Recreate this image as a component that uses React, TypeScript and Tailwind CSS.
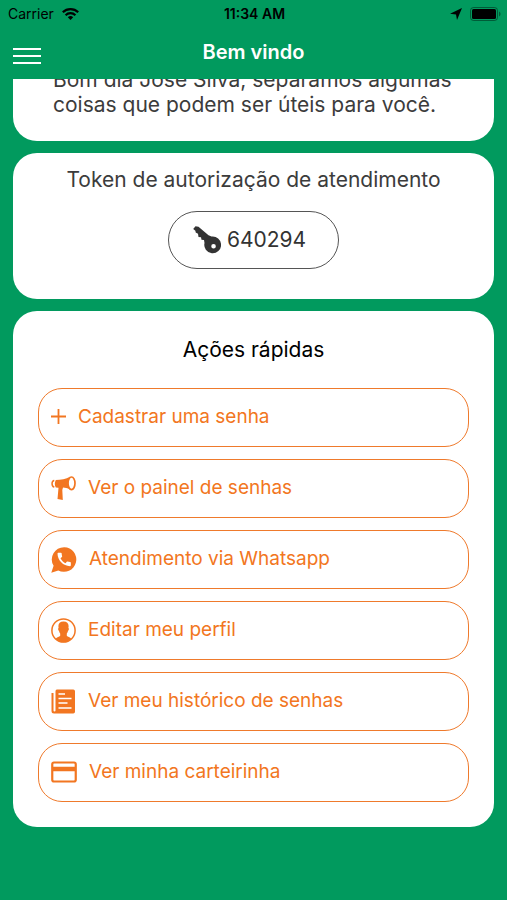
import type { ReactNode } from "react";

function PlusIcon() {
  return (
    <svg width="15" height="25" viewBox="0 0 15 25" fill="none" stroke="currentColor" strokeWidth="1.8" aria-hidden="true">
      <path d="M0 11.500h15M7.500 4v15" />
    </svg>
  );
}

function MegaphoneIcon() {
  return (
    <svg width="25" height="25" viewBox="0 0 25 25" fill="currentColor" aria-hidden="true">
      <path d="M4.800 4C10 4 15 3.200 19 0.800C16.800 5 16.800 9.500 18.800 13.200C16.500 11.800 14 11.500 12 11.400L11.300 14L11.800 24L6.500 23L7.500 11.800L4.800 11.500C3.500 9 3.500 6.500 4.800 4Z" />
      <ellipse cx="20.500" cy="7.300" rx="3.500" ry="6.300" fill="none" stroke="currentColor" strokeWidth="1.700" />
      <path d="M3.300 4.500C0.300 4.800 0.300 10.500 3.300 11" fill="none" stroke="currentColor" strokeWidth="1.500" />
    </svg>
  );
}

function WhatsappIcon() {
  return (
    <svg width="26" height="26" viewBox="0 0 26 26" fill="currentColor" aria-hidden="true">
      <path d="M13.300 0.200a12.300 12.300 0 1 1-6 23.200L0.300 25.800L2.600 18.800A12.300 12.300 0 0 1 13.300 0.200Z" />
      <g transform="translate(4.300 3.600) scale(0.740)" fill="white">
        <path d="M20.010 15.380c-1.230 0-2.420-.2-3.530-.56a.977.977 0 0 0-1.010.24l-1.570 1.970c-2.830-1.350-5.480-3.900-6.890-6.830l1.950-1.660c.27-.28.35-.67.24-1.020-.37-1.110-.56-2.300-.56-3.530 0-.54-.45-.99-.99-.99H4.190C3.650 3 3 3.240 3 3.990 3 13.280 10.730 21 20.010 21c.71 0 .99-.63.99-1.180v-3.450c0-.54-.45-.99-.99-.99z" />
      </g>
    </svg>
  );
}

function ProfileIcon() {
  return (
    <svg width="25" height="25" viewBox="0 0 25 25" fill="currentColor" aria-hidden="true">
      <circle cx="12.500" cy="12.500" r="11.600" fill="none" stroke="currentColor" strokeWidth="1.500" />
      <path d="M12.500 3.500c3.400 0 5.100 1.800 5.100 4.600 0 .9-.1 1.400-.2 1.900.8.3.5 2.400-.4 2.900-.3 1.300-.7 2-1.200 2.600v2.300c.9 1.300 3.200 1.300 4.700 2.900a11 11 0 0 1-16 0c1.500-1.600 3.800-1.600 4.700-2.900v-2.300c-.5-.6-.9-1.300-1.200-2.600-.9-.5-1.200-2.600-.4-2.900-.1-.5-.2-1-.2-1.900 0-2.800 1.700-4.600 5.100-4.600Z" />
    </svg>
  );
}

function HistoryIcon() {
  return (
    <svg width="25" height="25" viewBox="0 0 25 25" fill="currentColor" aria-hidden="true">
      <path d="M6.500 0.500h15.800a1.700 1.700 0 0 1 1.700 1.700v20.600a1.700 1.700 0 0 1-1.700 1.700H3a2.500 2.500 0 0 1-2.500-2.500V4h2v17.500a1 1 0 0 0 2 0V2.200a1.700 1.700 0 0 1 2-1.700Z" />
      <path d="M7.500 5h6.500M7.500 9.500h13M7.500 14h9M7.500 19h13" stroke="white" strokeWidth="1.500" />
    </svg>
  );
}

function CardIcon() {
  return (
    <svg width="26" height="25" viewBox="0 0 26 25" fill="none" stroke="currentColor" aria-hidden="true">
      <rect x="1.250" y="2.500" width="23.500" height="19" rx="1.700" strokeWidth="2.200" />
      <path d="M1 9h24" strokeWidth="4.500" />
    </svg>
  );
}

function KeyIcon() {
  return (
    <svg width="28" height="28" viewBox="0 0 28 28" fill="currentColor" aria-hidden="true">
      <path fillRule="evenodd" d="M2.500 0.300L5.500 0.800L15.500 9.300L18.500 10.600A8.400 8.400 0 1 1 11.500 17L11 14L8.500 13.800L8 11.300L5.500 11L5 7.800L2.700 6.500L2.400 4.700L0.200 3ZM20.500 18a2.300 2.300 0 1 0 .1 4.600a2.300 2.300 0 0 0-.1-4.600Z" />
    </svg>
  );
}

function WifiIcon() {
  return (
    <svg width="17" height="12" viewBox="0 0 17 12" fill="none" stroke="black" strokeWidth="2.200" aria-hidden="true">
      <path d="M0.800 4.300a11 11 0 0 1 15.400 0M3.600 7.200a7 7 0 0 1 9.800 0" />
      <path d="M8.500 12L5.800 9.200a4 4 0 0 1 5.400 0Z" fill="black" stroke="none" />
    </svg>
  );
}

function StatusBar() {
  return (
    <div className="grid h-7 grid-cols-3 items-center pr-1.5 pl-2 text-sm text-black">
      <div className="flex items-center gap-2">
        <span>Carrier</span>
        <WifiIcon />
      </div>
      <span className="text-center font-semibold whitespace-nowrap">11:34 AM</span>
      <div className="flex items-center justify-end gap-2">
        <svg width="12" height="12" viewBox="0 0 12 12" aria-hidden="true">
          <path d="M12 0L7 12L6 6.500L0 5.800Z" />
        </svg>
        <svg width="31" height="14" viewBox="0 0 31 14" aria-hidden="true">
          <rect x="0.500" y="0.500" width="27" height="13" rx="3" fill="none" stroke="black" strokeOpacity="0.400" />
          <rect x="2" y="2" width="24" height="10" rx="1.500" />
          <path d="M29 4.500c2 .8 2 4.200 0 5Z" fillOpacity="0.400" />
        </svg>
      </div>
    </div>
  );
}

const actions: { label: string; icon: ReactNode }[] = [
  { label: "Cadastrar uma senha", icon: <PlusIcon /> },
  { label: "Ver o painel de senhas", icon: <MegaphoneIcon /> },
  { label: "Atendimento via Whatsapp", icon: <WhatsappIcon /> },
  { label: "Editar meu perfil", icon: <ProfileIcon /> },
  { label: "Ver meu histórico de senhas", icon: <HistoryIcon /> },
  { label: "Ver minha carteirinha", icon: <CardIcon /> },
];

export default function App() {
  return (
    <div className="min-h-screen bg-[#019a5e] font-['Inter',sans-serif]">
      <header>
        <StatusBar />
        <div className="grid h-[51px] grid-cols-[40px_1fr_40px] items-center px-3">
          <button type="button" aria-label="Menu" className="text-white">
            <svg width="30" height="23" viewBox="0 0 30 23" stroke="currentColor" strokeWidth="2" aria-hidden="true">
              <path d="M1 7h28M1 14h28M1 21h28" />
            </svg>
          </button>
          <h1 className="pb-1 text-center text-xl font-semibold text-white">Bem vindo</h1>
        </div>
      </header>

      <main className="flex flex-col gap-3 px-[13px] pb-6 text-[#3c3c3c]">
        <section className="flex h-[62px] items-end overflow-hidden rounded-b-3xl bg-white px-10 pb-6">
          <p className="text-[21px] leading-[25px]">Bom dia José Silva, separamos algumas coisas que podem ser úteis para você.</p>
        </section>

        <section className="flex flex-col items-center rounded-3xl bg-white pt-[13px] pb-[30px]">
          <h2 className="text-[21px] leading-7">Token de autorização de atendimento</h2>
          <div className="mt-[17px] flex h-[58px] items-center gap-1.5 rounded-full border border-[#555] pr-8 pl-6 text-[21px] text-[#333]">
            <KeyIcon />
            <span>640294</span>
          </div>
        </section>

        <section className="rounded-3xl bg-white px-[25px] py-[25px]">
          <h2 className="text-center text-[21px] leading-7 text-black">Ações rápidas</h2>
          <div className="mt-6 flex flex-col gap-3">
            {actions.map((action) => (
              <button
                key={action.label}
                type="button"
                className="flex h-[59px] items-center gap-3 rounded-3xl border border-[#ef7a2c] px-3 text-[19px] text-[#f27621]"
              >
                {action.icon}
                <span>{action.label}</span>
              </button>
            ))}
          </div>
        </section>
      </main>
    </div>
  );
}
